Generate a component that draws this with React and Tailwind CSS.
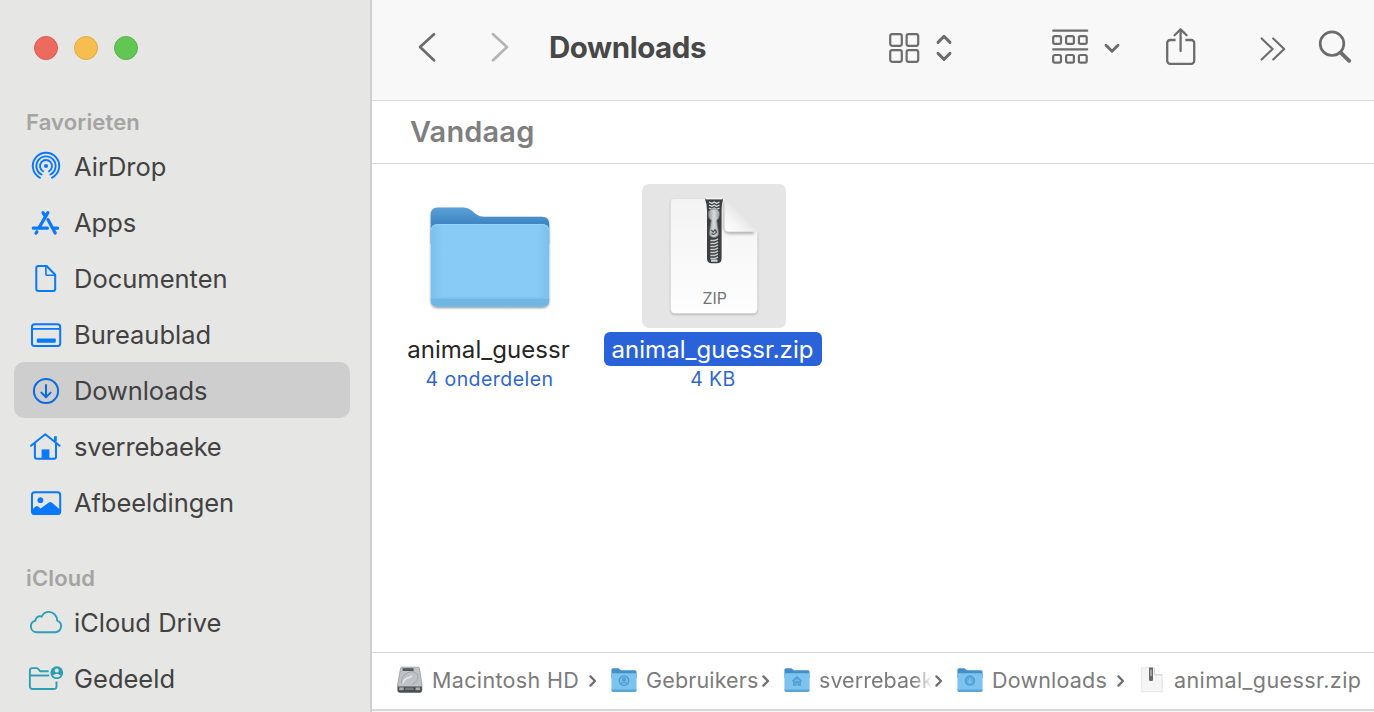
import React from "react";

const BLUE = "#0a78fa";
const TEAL = "#2b9fb3";

function Icon({ children, color = BLUE, width = 2 }) {
  return (
    <svg
      className="h-10 w-10 shrink-0"
      viewBox="0 0 40 40"
      fill="none"
      stroke={color}
      strokeWidth={width}
      strokeLinecap="round"
      strokeLinejoin="round"
    >
      {children}
    </svg>
  );
}

const AirDropIcon = () => (
  <Icon width={1.9}>
    <path d="M13.9 30.7A13.2 13.2 0 1 1 26.1 30.7" />
    <path d="M15.6 27.5A9.6 9.6 0 1 1 24.4 27.5" />
    <path d="M17 24.2A6 6 0 1 1 23 24.2" />
    <circle cx="20" cy="19" r="2.1" fill={BLUE} stroke="none" />
  </Icon>
);

const AppsIcon = () => (
  <Icon width={3.2}>
    <path d="M17 9.6L19.3 13.4M21.9 9.6L13.3 24.2M7.3 25.2H21.4M28 25.2H31.6M10.9 28.8L10 30.2M21.9 16.6L29.2 30" />
  </Icon>
);

const DocumentIcon = () => (
  <Icon>
    <path d="M12.6 7H20.6L29.2 15.8V29.8A2.3 2.3 0 0 1 26.9 32.1H12.6A2.3 2.3 0 0 1 10.3 29.8V9.3A2.3 2.3 0 0 1 12.6 7Z" />
    <path d="M19.9 7.6V14.9A1.4 1.4 0 0 0 21.3 16.3H28.8" strokeWidth="1.6" />
  </Icon>
);

const DesktopIcon = () => (
  <Icon>
    <rect x="6" y="9.3" width="28.2" height="21.8" rx="2.6" />
    <path d="M6 13.9H34" strokeWidth="1.8" />
    <rect x="10.8" y="23.6" width="19" height="4.1" rx="1" fill={BLUE} stroke="none" />
  </Icon>
);

const DownloadIcon = () => (
  <Icon color="#0a6ce4">
    <circle cx="20" cy="20" r="12.1" />
    <path d="M20 14V26M15.4 21.6L20 26.2L24.6 21.6" />
  </Icon>
);

const HomeIcon = () => (
  <Icon>
    <path d="M5 18.8L19.3 7.2L33.6 18.8" />
    <path d="M8.9 16.5V29.8A2 2 0 0 0 10.9 31.8H28A2 2 0 0 0 30 29.8V16.5" />
    <path d="M29.4 9.2V14.4" strokeWidth="2.8" strokeLinecap="butt" />
    <rect x="15.6" y="22.4" width="7.8" height="9.6" fill={BLUE} stroke="none" />
  </Icon>
);

const PicturesIcon = () => (
  <Icon>
    <rect x="6" y="9.3" width="28.2" height="21.8" rx="2.6" />
    <circle cx="14.4" cy="17.2" r="2.9" fill={BLUE} stroke="none" />
    <path
      d="M6 26.8L9.6 23.6Q10.9 22.5 12.2 23.6L14.6 25.6L22.8 19.6Q24.4 18.4 26 19.7L34.2 26.8V29A2 2 0 0 1 32 31H8.2A2 2 0 0 1 6 29Z"
      fill={BLUE}
      stroke="none"
    />
  </Icon>
);

const CloudIcon = () => (
  <Icon color={TEAL} width={1.9}>
    <path d="M11 29.2C7.5 29.2 4.9 26.7 4.9 23.4C4.9 20.6 6.7 18.4 9.4 17.7C9.2 14.5 12.6 12.4 15.7 13.6C17.1 10.6 19.8 8.9 22.8 8.9C27.4 8.9 31 12.6 31.2 17.6C33.6 18.4 35.1 20.6 35.1 23.3C35.1 26.6 32.5 29.2 29.1 29.2Z" />
  </Icon>
);

const SharedIcon = () => (
  <Icon color={TEAL} width={1.9}>
    <path d="M22.6 12.2H14.6C13.2 12.2 12.6 9.1 10.6 9.1H6.3A2.4 2.4 0 0 0 3.9 11.5V27.6A2.4 2.4 0 0 0 6.3 30H28.1A2.4 2.4 0 0 0 30.5 27.6V22.4" strokeLinecap="butt" />
    <path d="M4 16.5H23.2" strokeLinecap="butt" />
    <circle cx="30.8" cy="13.7" r="6.4" fill={TEAL} stroke="none" />
    <circle cx="30.8" cy="11.6" r="2" fill="#e6e6e4" stroke="none" />
    <path d="M26.9 16.7Q30.8 12.6 34.7 16.7Q30.8 20 26.9 16.7Z" fill="#e6e6e4" stroke="none" />
  </Icon>
);

function SidebarItem({ icon, label, active, tracking = "tracking-normal" }) {
  return (
    <div
      className={
        "flex h-14 items-center gap-2 rounded-[10px] pt-0.5 pl-3 text-[25.5px] text-[#424242] " +
        (active ? "bg-[#cecece] " : "") +
        tracking
      }
    >
      {icon}
      <span className="whitespace-nowrap">{label}</span>
    </div>
  );
}

function Sidebar() {
  return (
    <aside className="flex h-full w-[372px] shrink-0 flex-col border-r-2 border-[#cfcfcd] bg-[#e6e6e4] pr-5 pl-3.5">
      <div className="flex gap-4 pt-9 pl-5">
        <span className="h-6 w-6 rounded-full border border-[#dc5a50] bg-[#ed6a5f]" />
        <span className="h-6 w-6 rounded-full border border-[#e0ab42] bg-[#f6be50]" />
        <span className="h-6 w-6 rounded-full border border-[#55b348] bg-[#62c655]" />
      </div>
      <h2 className="mt-[46px] h-8 pl-3 text-[22px] leading-8 font-semibold tracking-[0.15px] text-[#a4a4a2]">
        Favorieten
      </h2>
      <nav>
        <SidebarItem icon={<AirDropIcon />} label="AirDrop" />
        <SidebarItem icon={<AppsIcon />} label="Apps" />
        <SidebarItem icon={<DocumentIcon />} label="Documenten" />
        <SidebarItem icon={<DesktopIcon />} label="Bureaublad" />
        <SidebarItem icon={<DownloadIcon />} label="Downloads" active tracking="tracking-[-0.1px]" />
        <SidebarItem icon={<HomeIcon />} label="sverrebaeke" tracking="tracking-[-0.18px]" />
        <SidebarItem icon={<PicturesIcon />} label="Afbeeldingen" tracking="tracking-[-0.08px]" />
      </nav>
      <h2 className="mt-8 h-8 pl-3 text-[22px] leading-8 font-semibold tracking-[0.15px] text-[#a4a4a2]">
        iCloud
      </h2>
      <nav>
        <SidebarItem icon={<CloudIcon />} label="iCloud Drive" />
        <SidebarItem icon={<SharedIcon />} label="Gedeeld" />
      </nav>
    </aside>
  );
}

function Toolbar() {
  return (
    <header className="flex h-[101px] shrink-0 items-start border-b border-[#dadada] bg-[#f8f8f8] pt-6 pl-10">
      <svg className="h-12 w-[108px]" viewBox="0 0 108 48" fill="none" strokeWidth="2.7" strokeLinecap="round" strokeLinejoin="round">
        <path d="M22 10.2L8 23L22 36.2" stroke="#6c6c6c" />
        <path d="M81 10.2L95 23L81 36.2" stroke="#b4b4b4" />
      </svg>
      <h1 className="ml-[29px] w-[311px] text-[29.5px] leading-[47px] font-bold tracking-[-0.45px] text-[#484848]">Downloads</h1>
      <svg className="ml-7 h-12 w-[68px]" viewBox="0 0 68 48" fill="none" stroke="#6c6c6c" strokeWidth="2.2" strokeLinecap="round" strokeLinejoin="round">
        <rect x="2.2" y="10.2" width="11.6" height="11.6" rx="2" />
        <rect x="18.6" y="10.2" width="11.6" height="11.6" rx="2" />
        <rect x="2.2" y="26.2" width="11.6" height="11.6" rx="2" />
        <rect x="18.6" y="26.2" width="11.6" height="11.6" rx="2" />
        <path d="M50 18.4L56 12.4L62 18.4M50 29.4L56 35.4L62 29.4" strokeWidth="2.9" />
      </svg>
      <svg className="ml-24 h-12 w-[70px]" viewBox="0 0 70 48" fill="none" stroke="#6c6c6c" strokeWidth="2.2" strokeLinecap="round" strokeLinejoin="round">
        <path d="M1.2 6.7H35.2M1.2 25.3H35.2" />
        <rect x="1.2" y="12.2" width="7.8" height="7.6" rx="1.6" />
        <rect x="14.1" y="12.2" width="7.8" height="7.6" rx="1.6" />
        <rect x="26.9" y="12.2" width="7.8" height="7.6" rx="1.6" />
        <rect x="1.2" y="31" width="7.8" height="7.6" rx="1.6" />
        <rect x="14.1" y="31" width="7.8" height="7.6" rx="1.6" />
        <rect x="26.9" y="31" width="7.8" height="7.6" rx="1.6" />
        <path d="M54 21.2L60 27.2L66 21.2" strokeWidth="2.9" />
      </svg>
      <svg className="ml-[42px] h-12 w-8" viewBox="0 0 32 48" fill="none" stroke="#6c6c6c" strokeWidth="2.3" strokeLinecap="round" strokeLinejoin="round">
        <path d="M11.6 16H6.2A3 3 0 0 0 3.2 19V36.8A3 3 0 0 0 6.2 39.8H27.2A3 3 0 0 0 30.2 36.8V19A3 3 0 0 0 27.2 16H21.4" strokeLinecap="butt" />
        <path d="M16.6 27V5.6M10.6 11.2L16.6 5.2L22.6 11.2" />
      </svg>
      <svg className="ml-16 h-12 w-7" viewBox="0 0 28 48" fill="none" stroke="#6c6c6c" strokeWidth="2.1" strokeLinecap="round" strokeLinejoin="round">
        <path d="M1.6 14.4L12.6 25L1.6 35.6M13.2 14.4L24.2 25L13.2 35.6" />
      </svg>
      <svg className="ml-7 h-12 w-10" viewBox="0 0 40 48" fill="none" stroke="#6c6c6c" strokeLinecap="round">
        <circle cx="16" cy="19.7" r="11.8" strokeWidth="2.7" />
        <path d="M25 28.8L33.2 36.8" strokeWidth="3.9" />
      </svg>
    </header>
  );
}

function FolderArt() {
  return (
    <svg className="h-36 w-36" viewBox="0 0 144 144">
      <defs>
        <linearGradient id="folderBack" x1="0" y1="0" x2="0" y2="1">
          <stop offset="0" stopColor="#5ba0d6" />
          <stop offset="0.42" stopColor="#3f87c4" />
          <stop offset="1" stopColor="#3f87c4" />
        </linearGradient>
        <linearGradient id="folderFront" x1="0" y1="0" x2="1" y2="0">
          <stop offset="0" stopColor="#7bbfea" />
          <stop offset="0.1" stopColor="#89cbf7" />
          <stop offset="0.9" stopColor="#89cbf7" />
          <stop offset="1" stopColor="#7bbfea" />
        </linearGradient>
        <filter id="folderShadow" x="-10%" y="-10%" width="120%" height="125%">
          <feDropShadow dx="0" dy="1.2" stdDeviation="1.1" floodColor="#000" floodOpacity="0.4" />
        </filter>
      </defs>
      <g filter="url(#folderShadow)">
        <path
          d="M12.7 31Q12.7 23.6 20 23.6H45.5Q50 23.6 53.2 26.2L58 30.2Q61.5 32.8 66 32.8H124Q131.2 32.8 131.2 40V60H12.7Z"
          fill="url(#folderBack)"
        />
        <path d="M12.7 47Q12.7 40 19.7 40H124.2Q131.2 40 131.2 47V116Q131.2 122.8 124.2 122.8H19.7Q12.7 122.8 12.7 116Z" fill="url(#folderFront)" />
        <path d="M12.7 114.5H131.2V116Q131.2 122.8 124.2 122.8H19.7Q12.7 122.8 12.7 116Z" fill="#6fb6e3" />
      </g>
      <path d="M13.5 46Q14 40.6 19.7 40.6H124.2Q129.8 40.6 130.4 46" fill="none" stroke="#98d4fa" strokeWidth="0.8" />
      <path d="M13 113.8H131" stroke="#7fc3ee" strokeWidth="1.4" />
    </svg>
  );
}

const TEETH = [18, 21, 24];
const LOWER_TEETH = [55, 58, 61, 64, 67, 70, 73];

function ZipArt() {
  return (
    <svg className="h-36 w-36" viewBox="0 0 144 144">
      <defs>
        <linearGradient id="page" x1="0" y1="0" x2="0" y2="1">
          <stop offset="0" stopColor="#f3f3f3" />
          <stop offset="1" stopColor="#fefefe" />
        </linearGradient>
        <linearGradient id="fold" gradientUnits="userSpaceOnUse" x1="84" y1="47" x2="101" y2="30">
          <stop offset="0" stopColor="#ffffff" />
          <stop offset="0.45" stopColor="#f6f6f6" />
          <stop offset="0.85" stopColor="#e9e9e9" />
          <stop offset="1" stopColor="#e5e5e5" />
        </linearGradient>
        <linearGradient id="pull" x1="0" y1="0" x2="1" y2="0">
          <stop offset="0" stopColor="#8e9295" />
          <stop offset="0.5" stopColor="#d9dcde" />
          <stop offset="1" stopColor="#9b9fa2" />
        </linearGradient>
        <filter id="pageShadow" x="-10%" y="-10%" width="120%" height="120%">
          <feDropShadow dx="0" dy="1" stdDeviation="1.2" floodColor="#000" floodOpacity="0.35" />
        </filter>
        <filter id="soft" x="-20%" y="-20%" width="140%" height="140%">
          <feGaussianBlur stdDeviation="1.4" />
        </filter>
        <clipPath id="pageClip">
          <path d="M28 14H82.6V47.6H115.2V130H28Z" />
        </clipPath>
      </defs>
      <path
        filter="url(#pageShadow)"
        d="M32.5 15H82.6V47.6H115.2V125Q115.2 129.2 111.5 129.2H32.5Q28.8 129.2 28.8 125V19Q28.8 15 32.5 15Z"
        fill="url(#page)"
      />
      <g clipPath="url(#pageClip)">
        <path d="M83 18V44Q83 48.4 88 48.4H112" stroke="#000" strokeOpacity="0.35" strokeWidth="2.6" fill="none" filter="url(#soft)" />
      </g>
      <path d="M82.6 14.6L115.4 47.6H87Q82.6 47.6 82.6 43.2Z" fill="url(#fold)" />
      <path d="M62.8 14.5H81.2Q79.6 20 79.6 26V74.5Q79.6 79.2 75 79.2H69.5Q65 79.2 65 74.5V26Q65 20 62.8 14.5Z" fill="#3c3e40" />
      <path d="M63.4 14.6H80.6" stroke="#f7f7f7" strokeWidth="1.6" />
      {TEETH.map((y) => (
        <path key={y} d={`M67 ${y}L70 ${y + 1.4}L72.2 ${y}L74.6 ${y + 1.4}L77.6 ${y}`} stroke="#d7d9da" strokeWidth="1.3" fill="none" />
      ))}
      {LOWER_TEETH.map((y) => (
        <path key={y} d={`M68.3 ${y + 1.6}H72.5L76 ${y}`} stroke="#c9cccd" strokeWidth="1.5" fill="none" />
      ))}
      <rect x="69" y="75.4" width="6.6" height="2.4" rx="0.6" fill="#d5d7d8" />
      <path d="M66.2 30Q66.2 25 72 25Q77.6 25 77.6 30Q77.6 34 74.8 36.5L76.6 49Q76.6 53.4 72 53.4Q67.2 53.4 67.2 49L69.2 36.5Q66.2 34 66.2 30Z" fill="url(#pull)" stroke="#6e7275" strokeWidth="0.7" />
      <path d="M69.4 46.2L71.2 48L73 45.6L74.6 48.2L71.6 50.6L69.6 49.4" stroke="#4d5052" strokeWidth="1.2" fill="none" />
      <text x="72.8" y="120" textAnchor="middle" fontSize="16" fill="#747474" textLength="24.5" lengthAdjust="spacingAndGlyphs">
        ZIP
      </text>
    </svg>
  );
}

function Files() {
  return (
    <main className="flex flex-1 items-start pt-5 pl-[5px]">
      <figure className="flex w-56 flex-col items-center">
        <div className="ml-0.5 h-36 w-36">
          <FolderArt />
        </div>
        <figcaption className="flex flex-col items-center">
          <span className="mt-1 flex h-[34px] items-center pt-0.5 pr-px text-[24px] tracking-[0.05px] whitespace-nowrap text-[#262626]">animal_guessr</span>
          <span className="pl-px text-[19.5px] leading-[26px] tracking-[0.45px] whitespace-nowrap text-[#2f67cf]">4 onderdelen</span>
        </figcaption>
      </figure>
      <figure className="flex w-56 flex-col items-center">
        <div className="ml-0.5 h-36 w-36 rounded-[7px] bg-[#e5e5e5]">
          <ZipArt />
        </div>
        <figcaption className="flex flex-col items-center">
          <span className="mt-1 flex h-[34px] w-[218px] items-center justify-center rounded-[6px] bg-[#2962d9] pt-0.5 pr-px text-[24px] tracking-[0.05px] whitespace-nowrap text-white">
            animal_guessr.zip
          </span>
          <span className="text-[19.5px] leading-[26px] tracking-[0.4px] whitespace-nowrap text-[#2f67cf]">4 KB</span>
        </figcaption>
      </figure>
    </main>
  );
}

function DriveIcon() {
  return (
    <svg className="h-7 w-[26px] shrink-0" viewBox="0 0 26 28">
      <path d="M3.5 2.5Q3.8 1.2 5.2 1.2H20.8Q22.2 1.2 22.5 2.5L25 19V24.2Q25 26.4 22.8 26.4H2.8Q0.6 26.4 0.6 24.2V19Z" fill="#bfc3c7" stroke="#8d9194" strokeWidth="0.7" />
      <path d="M0.8 20.5H24.8V24.2Q24.8 26.4 22.8 26.4H2.8Q0.8 26.4 0.8 24.2Z" fill="#4b4d4f" />
      <rect x="2.2" y="21.4" width="4.5" height="2.8" fill="#a9acae" />
      <rect x="8.2" y="21.6" width="8.5" height="2.4" fill="#77797b" />
      <rect x="18.6" y="21.4" width="4.4" height="2.8" fill="#a9acae" />
      <rect x="5.6" y="2.2" width="11" height="2.8" fill="#55585a" />
      <path d="M4.6 17.6Q3.4 9.6 11 6.6Q19 4 20.8 9.4Q21.8 15 15.6 18" fill="none" stroke="#9ca1a6" strokeWidth="0.9" />
      <path d="M6 17.4Q7 12.4 12.4 11.6L15 9.8" fill="none" stroke="#e6e8ea" strokeWidth="1.5" />
    </svg>
  );
}

function SmallFolder({ children }) {
  return (
    <svg className="h-7 w-[26px] shrink-0" viewBox="0 0 26 28">
      <path d="M0.4 3.8Q0.4 2.2 2 2.2H7.4L10 4.2H24Q25.6 4.2 25.6 6V12H0.4Z" fill="#4290ca" />
      <path d="M0.4 8Q0.4 7.2 1.4 7.2H24.6Q25.6 7.2 25.6 8V24Q25.6 26 23.6 26H2.4Q0.4 26 0.4 24Z" fill="#7cc3f0" />
      <path d="M0.4 23.4H25.6V24Q25.6 26 23.6 26H2.4Q0.4 26 0.4 24Z" fill="#5da5d2" />
      <g stroke="#4f9dd0" fill="#5fadde" strokeWidth="1.3">
        {children}
      </g>
    </svg>
  );
}

function SmallZip() {
  return (
    <svg className="h-7 w-6 shrink-0" viewBox="0 0 24 28">
      <path d="M1.6 1.8H14.6V8.8H22.2V25.8H1.6Z" fill="#f5f5f5" stroke="#e2e2e2" strokeWidth="0.9" />
      <path d="M14.6 1.8V8.8H22.2" fill="#ffffff" stroke="#cfcfcf" strokeWidth="1" />
      <path d="M9 1.5H13V13.5Q13 15 11.5 15H10.5Q9 15 9 13.5Z" fill="#656769" />
      <path d="M11 3.5V10" stroke="#b9bbbc" strokeWidth="1.4" />
    </svg>
  );
}

function Chevron() {
  return (
    <svg className="h-7 w-2.5 shrink-0" viewBox="0 0 10 28" fill="none" stroke="#6f6f6f" strokeWidth="2.3" strokeLinecap="round" strokeLinejoin="round">
      <path d="M2.4 10.4L7 15L2.4 19.6" />
    </svg>
  );
}

function PathBar() {
  return (
    <footer className="flex h-[57px] shrink-0 items-center overflow-hidden border-t border-[#d8d8d8] pb-0.5 pl-[25px] text-[21.5px] tracking-[0.35px] whitespace-nowrap text-[#7b7b7b]">
      <DriveIcon />
      <span className="ml-[9px] w-[156px]">Macintosh HD</span>
      <Chevron />
      <span className="w-[13px] shrink-0" />
      <SmallFolder>
        <circle cx="13" cy="14.6" r="4.8" fill="#74bbe9" />
        <circle cx="13" cy="13.2" r="1.4" />
        <path d="M10.2 17.6Q13 14.6 15.8 17.6" fill="none" />
      </SmallFolder>
      <span className="ml-[9px] w-[112px] overflow-hidden tracking-[0.15px]">Gebruikers</span>
      <span className="w-[3px] shrink-0" />
      <Chevron />
      <span className="w-[13px] shrink-0" />
      <SmallFolder>
        <path d="M8.4 15.2L13 11L17.6 15.2M9.8 14.6V19H11.8V16H14.2V19H16.2V14.6" />
      </SmallFolder>
      <span className="ml-[9px] w-[112px] overflow-hidden tracking-[0.05px] [mask-image:linear-gradient(to_right,black_84%,transparent_102%)]">sverrebaeke</span>
      <span className="w-[3px] shrink-0" />
      <Chevron />
      <span className="w-[13px] shrink-0" />
      <SmallFolder>
        <circle cx="13" cy="14.6" r="4.6" />
        <path d="M13 12.4V16.8M11.2 15.2L13 17L14.8 15.2" stroke="#7cc3f0" fill="none" />
      </SmallFolder>
      <span className="ml-[9px] w-[124px] tracking-[0.2px]">Downloads</span>
      <Chevron />
      <span className="w-[14px] shrink-0" />
      <SmallZip />
      <span className="ml-2.5 tracking-[0.42px]">animal_guessr.zip</span>
    </footer>
  );
}

export default function App() {
  return (
    <div className="flex h-[712px] w-[1374px] overflow-hidden bg-white font-['Inter',sans-serif]">
      <Sidebar />
      <section className="flex min-w-0 flex-1 flex-col">
        <Toolbar />
        <div className="flex h-[63px] shrink-0 items-center border-b border-[#dadada] pl-[38px]">
          <h2 className="text-[29px] font-semibold tracking-[0.15px] text-[#7f7f7f]">Vandaag</h2>
        </div>
        <Files />
        <PathBar />
        <div className="h-[3px] shrink-0 border-t-2 border-[#d8d8d8] bg-[#f6f6f6]" />
      </section>
    </div>
  );
}
